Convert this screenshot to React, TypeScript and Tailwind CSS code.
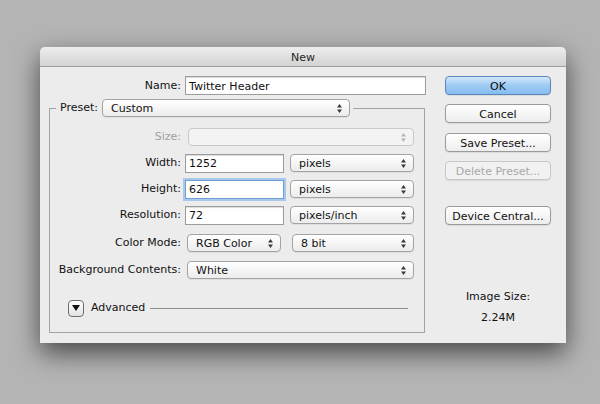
import React from 'react'

// little up/down chevrons used by mac popup buttons
function Arrows({ muted = false }: { muted?: boolean }) {
  const c = muted ? '#b5b5b5' : '#3a3a3a'
  return (
    <svg width="5" height="9" viewBox="0 0 5 9" className="shrink-0">
      <path d="M2.5 0 L5 3.4 L0 3.4 Z" fill={c} />
      <path d="M2.5 9 L5 5.6 L0 5.6 Z" fill={c} />
    </svg>
  )
}

function Select({ value, w, muted = false }: { value: string; w: string; muted?: boolean }) {
  return (
    <div
      className={`${w} h-[18px] shrink-0 flex items-center justify-between pl-[8px] pr-[7px] rounded-[4px] border ${
        muted
          ? 'border-[#c9c9c9] bg-[#f3f3f3]'
          : 'border-[#a3a3a3] bg-gradient-to-b from-[#ffffff] to-[#ececec] shadow-[0_1px_0_rgba(0,0,0,0.06)]'
      }`}
    >
      <span className="text-[#111] leading-none pt-px">{value}</span>
      <Arrows muted={muted} />
    </div>
  )
}

function Input({ value, w, focused = false }: { value: string; w: string; focused?: boolean }) {
  return (
    <div
      className={`${w} h-[19px] shrink-0 flex items-center pl-[3px] bg-white border ${
        focused
          ? 'border-[#6d9fd6] shadow-[0_0_0_2px_#a9c8ec]'
          : 'border-[#9c9c9c] shadow-[inset_0_1px_1px_rgba(0,0,0,0.15)]'
      }`}
    >
      <span className="text-[#0f0f0f] leading-none pt-px">{value}</span>
    </div>
  )
}

function Button({ label, primary = false, disabled = false, className = '' }: { label: string; primary?: boolean; disabled?: boolean; className?: string }) {
  let look = 'border-[#9a9a9a] bg-gradient-to-b from-[#ffffff] to-[#ededed] text-[#111]'
  if (primary) look = 'border-[#5a86bd] bg-gradient-to-b from-[#d3e7fa] via-[#9ecbf3] to-[#86bdf0] text-[#0c0c0c]'
  if (disabled) look = 'border-[#c8c8c8] bg-[#f1f1f1] text-[#a8a8a8]'
  return (
    <div className={`w-[106px] h-[19px] rounded-[4px] border flex items-center justify-center shadow-[0_1px_1px_rgba(0,0,0,0.08)] ${look} ${className}`}>
      <span className="leading-none pt-px">{label}</span>
    </div>
  )
}

function Row({ label, muted = false, className = '', children }: { label: string; muted?: boolean; className?: string; children: React.ReactNode }) {
  return (
    <div className={`h-[26px] flex items-center ${className}`}>
      <div className={`w-[131px] shrink-0 text-right pt-px ${muted ? 'text-[#a0a0a0]' : 'text-[#111]'}`}>{label}</div>
      <div className="flex items-center ml-[4px]">{children}</div>
    </div>
  )
}

export default function App() {
  return (
    <div className="w-[600px] h-[404px] bg-[#b4b4b4] pl-[40px] pt-[47px] font-['DejaVu_Sans',sans-serif] text-[11px] overflow-hidden">
      <div className="w-[526px] h-[296px] flex flex-col rounded-t-[5px] shadow-[0_10px_26px_rgba(0,0,0,0.6)]">
        {/* title bar */}
        <div className="h-[20px] shrink-0 rounded-t-[5px] bg-gradient-to-b from-[#eeeeee] to-[#d2d2d2] border-b border-[#9f9f9f] flex items-center justify-center">
          <span className="text-[#262626] leading-none pt-px">New</span>
        </div>

        <div className="flex-1 bg-[#ececec] flex">
          {/* left: fields */}
          <div className="w-[390px] shrink-0 pt-[9px]">
            <div className="h-[19px] flex items-center">
              <div className="w-[141px] text-right text-[#111] pt-px">Name:</div>
              <div className="ml-[4px]">
                <Input value="Twitter Header" w="w-[241px]" />
              </div>
            </div>

            <div className="ml-[9px] w-[376px] mt-[4px]">
              {/* top edge of the group with the preset popup in it */}
              <div className="h-[18px] flex items-center">
                <div className="w-[7px] h-[9px] self-end border-l border-t border-[#a2a2a2]" />
                <span className="px-[4px] text-[#111] pt-px">Preset:</span>
                <Select value="Custom" w="w-[248px]" />
                <div className="flex-1 h-[9px] self-end ml-[3px] border-t border-r border-[#a2a2a2]" />
              </div>

              <div className="border-l border-r border-b border-[#a2a2a2] pt-[7px] pb-[14px]">
                <Row label="Size:" muted>
                  <div className="ml-[3px]">
                    <Select value="" w="w-[226px]" muted />
                  </div>
                </Row>
                <Row label="Width:">
                  <Input value="1252" w="w-[99px]" />
                  <div className="ml-[6px]">
                    <Select value="pixels" w="w-[124px]" />
                  </div>
                </Row>
                <Row label="Height:">
                  <Input value="626" w="w-[99px]" focused />
                  <div className="ml-[6px]">
                    <Select value="pixels" w="w-[124px]" />
                  </div>
                </Row>
                <Row label="Resolution:">
                  <Input value="72" w="w-[99px]" />
                  <div className="ml-[6px]">
                    <Select value="pixels/inch" w="w-[124px]" />
                  </div>
                </Row>
                <Row label="Color Mode:" className="mt-[2px]">
                  <div className="ml-[2px]">
                    <Select value="RGB Color" w="w-[94px]" />
                  </div>
                  <div className="ml-[11px]">
                    <Select value="8 bit" w="w-[122px]" />
                  </div>
                </Row>
                <Row label="Background Contents:" className="mt-[1px]">
                  <div className="ml-[2px]">
                    <Select value="White" w="w-[227px]" />
                  </div>
                </Row>

                <div className="h-[20px] mt-[15px] flex items-center">
                  <div className="ml-[18px] w-[16px] h-[17px] rounded-[4px] border border-[#6e6e6e] bg-gradient-to-b from-[#ffffff] to-[#e2e2e2] flex items-center justify-center">
                    <svg width="8" height="6" viewBox="0 0 8 6">
                      <path d="M0 0 H8 L4 6 Z" fill="#111" />
                    </svg>
                  </div>
                  <span className="ml-[7px] text-[#111] pt-px">Advanced</span>
                  <div className="flex-1 ml-[5px] mr-[16px] h-px bg-[#8e8e8e]" />
                </div>
              </div>
            </div>
          </div>

          {/* right: buttons */}
          <div className="pl-[15px] pt-[9px] flex flex-col">
            <Button label="OK" primary />
            <Button label="Cancel" className="mt-[9px]" />
            <Button label="Save Preset..." className="mt-[10px]" />
            <Button label="Delete Preset..." disabled className="mt-[9px]" />
            <Button label="Device Central..." className="mt-[26px]" />
            <div className="w-[106px] mt-[65px] text-center text-[#111] leading-[14px]">Image Size:</div>
            <div className="w-[106px] mt-[7px] text-center text-[#111] leading-[14px]">2.24M</div>
          </div>
        </div>
      </div>
    </div>
  )
}
